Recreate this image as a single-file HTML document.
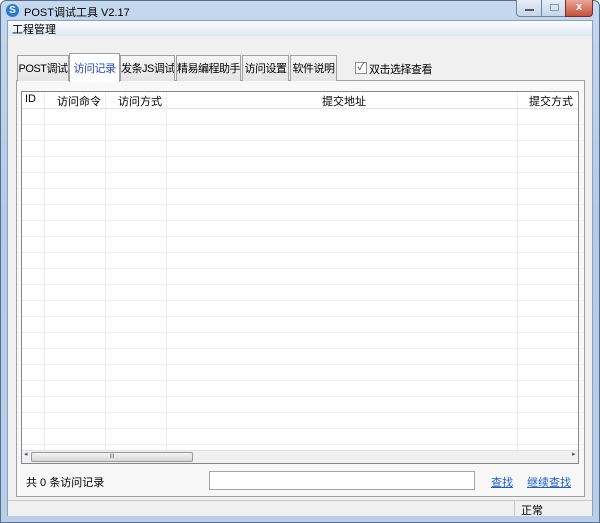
<!DOCTYPE html><html><head><meta charset="utf-8"><style>
*{margin:0;padding:0;box-sizing:border-box}
body{width:600px;height:523px;overflow:hidden;font:12px "Liberation Sans","Noto Sans CJK SC",sans-serif;color:#000;background:#fff}
.a{position:absolute;white-space:nowrap}
#win{left:0;top:0;width:600px;height:523px;background:linear-gradient(#c4d8ee,#b4cbe6 40%,#b9cfe8);border:1px solid #5a6f8c;border-radius:6px 6px 0 0}
#client{left:7px;top:20px;width:586px;height:496px;background:#f0f0f0;border:1px solid #8ca0bb}
.tab{top:55px;height:26px;background:linear-gradient(#f6f6f6,#e4e4e4);border:1px solid #a0a0a0;border-bottom:none;text-align:center;line-height:26px;font-size:11px;letter-spacing:-0.5px;overflow:hidden}
.grid{background-image:repeating-linear-gradient(to bottom,transparent 0,transparent 15px,#eeeeee 15px,#eeeeee 16px)}
.v{width:1px;background:#ececec}
</style></head><body>
<div id="win" class="a"></div>
<div class="a" style="left:6px;top:4px;width:13px;height:13px;border-radius:50%;background:#2a7ad4;color:#fff;font-size:10px;font-weight:bold;text-align:center;line-height:13px">S</div>
<div class="a" style="left:24px;top:4px;font-size:11px">POST调试工具 V2.17</div>
<div class="a" style="left:516px;top:0;width:26px;height:17px;border:1px solid #6d7f99;border-top:none;border-radius:0 0 0 4px;background:linear-gradient(#e6eef8,#c5d5ea)"><div class="a" style="left:8px;top:9px;width:9px;height:2px;background:#555"></div></div>
<div class="a" style="left:541px;top:0;width:25px;height:17px;border:1px solid #6d7f99;border-top:none;background:linear-gradient(#e6eef8,#c5d5ea)"><div class="a" style="left:8px;top:4px;width:9px;height:7px;border:1px solid #8a9ab0"></div></div>
<div class="a" style="left:565px;top:0;width:28px;height:17px;border:1px solid #6d3030;border-top:none;border-radius:0 0 4px 0;background:linear-gradient(#e9a89a,#c8503a);color:#fff;font-weight:bold;text-align:center;line-height:15px;font-size:11px">x</div>
<div id="client" class="a"></div>
<div class="a" style="left:8px;top:21px;width:584px;height:15px;background:linear-gradient(#fbfcfe,#dfe8f3)"></div>
<div class="a" style="left:12px;top:21px;font-size:11px">工程管理</div>
<div class="a" style="left:16px;top:80px;width:569px;height:417px;border:1px solid #a0a0a0;background:#f8f8f8"></div>
<div class="a tab" style="left:17px;width:52px">POST调试</div>
<div class="a tab" style="left:69px;top:53px;height:29px;width:51px;background:#fff;color:#2444c8;line-height:30px">访问记录</div>
<div class="a tab" style="left:120px;width:55px">发条JS调试</div>
<div class="a tab" style="left:176px;width:65px">精易编程助手</div>
<div class="a tab" style="left:242px;width:47px">访问设置</div>
<div class="a tab" style="left:290px;width:47px">软件说明</div>
<div class="a" style="left:355px;top:62px;width:12px;height:12px;border:1px solid #8f8f8f;background:#fff;color:#2a3a80;font-size:10px;line-height:10px;text-align:center">✓</div>
<div class="a" style="left:369px;top:61px;font-size:11px;letter-spacing:-0.5px">双击选择查看</div>
<div class="a grid" style="left:21px;top:91px;width:558px;height:373px;border:1px solid #828790;background-color:#fff;background-position:0 1px"></div>
<div class="a" style="left:22px;top:92px;width:556px;height:17px;background:#fff;border-bottom:1px solid #e5e5e5"></div>
<div class="a v" style="left:44px;top:92px;height:358px"></div>
<div class="a v" style="left:105px;top:92px;height:358px"></div>
<div class="a v" style="left:166px;top:92px;height:358px"></div>
<div class="a v" style="left:517px;top:92px;height:358px"></div>
<div class="a" style="left:25px;top:93px;font-size:11px">ID</div>
<div class="a" style="left:57px;top:93px;font-size:11px">访问命令</div>
<div class="a" style="left:118px;top:93px;font-size:11px">访问方式</div>
<div class="a" style="left:322px;top:93px;font-size:11px">提交地址</div>
<div class="a" style="left:529px;top:93px;font-size:11px">提交方式</div>
<div class="a" style="left:22px;top:450px;width:556px;height:13px;background:#f0f0f0;border-top:1px solid #e0e0e0"></div>
<div class="a" style="left:24px;top:450px;font-size:7px;color:#555">◂</div>
<div class="a" style="left:572px;top:450px;font-size:7px;color:#555">▸</div>
<div class="a" style="left:31px;top:452px;width:162px;height:10px;border:1px solid #9a9a9a;border-radius:2px;background:linear-gradient(#f4f4f4,#d6d6d6);text-align:center;font-size:6px;line-height:8px;color:#666">III</div>
<div class="a" style="left:26px;top:474px;font-size:11px">共 0 条访问记录</div>
<div class="a" style="left:209px;top:471px;width:266px;height:19px;border:1px solid #a6a6a6;background:#fff"></div>
<div class="a" style="left:491px;top:474px;font-size:11px;color:#1a5fd0;text-decoration:underline">查找</div>
<div class="a" style="left:527px;top:474px;font-size:11px;color:#1a5fd0;text-decoration:underline">继续查找</div>
<div class="a" style="left:8px;top:500px;width:584px;height:16px;border-top:1px solid #c8c8c8;background:#f0f0f0"></div>
<div class="a" style="left:514px;top:500px;width:1px;height:16px;background:#c8c8c8"></div>
<div class="a" style="left:521px;top:502px;font-size:11px">正常</div>
</body></html>
